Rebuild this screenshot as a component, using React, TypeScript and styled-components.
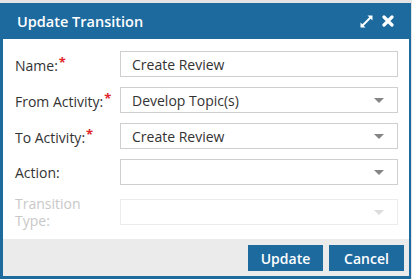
import React from "react";
import styled, { createGlobalStyle } from "styled-components";

const GlobalStyle = createGlobalStyle`
  html, body {
    margin: 0;
    padding: 0;
    background: #e4e4e4;
    font-family: "Open Sans", "Liberation Sans", sans-serif;
  }
`;

const Dialog = styled.div`
  margin-top: 3px;
  width: 411px;
  box-sizing: border-box;
  border: 3px solid #1d6a9e;
  border-top: none;
  border-right-width: 2px;
  background: #fff;
`;

const Header = styled.div`
  height: 36px;
  margin: 0 -2px 0 -3px;
  padding: 0 17px 0 17px;
  background: #1d6a9e;
  display: flex;
  align-items: center;
  justify-content: space-between;
  color: #fff;
`;

const Title = styled.div`
  font-size: 14.5px;
  font-weight: 600;
`;

const HeaderIcons = styled.div`
  display: flex;
  align-items: center;
  gap: 8px;
`;

const Body = styled.div`
  padding: 12px 11px 10px 12px;
  display: flex;
  flex-direction: column;
  gap: 10px;
`;

const Row = styled.div`
  display: flex;
  align-items: center;
  min-height: 26px;
`;

const Label = styled.label<{ $disabled?: boolean }>`
  width: 105px;
  flex: none;
  font-size: 14px;
  line-height: 17px;
  color: ${(p) => (p.$disabled ? "#c8c8c8" : "#333")};
  padding-right: 8px;
  box-sizing: border-box;
`;

const Req = styled.span`
  color: #e0262b;
  font-size: 13px;
  font-weight: 700;
  vertical-align: 4px;
  margin-left: 1px;
`;

const Field = styled.div<{ $disabled?: boolean }>`
  position: relative;
  flex: 1;
  height: 26px;
  box-sizing: border-box;
  border: 1px solid ${(p) => (p.$disabled ? "#ececec" : "#cfcfcf")};
  background: #fff;
  display: flex;
  align-items: center;
  padding: 0 11px;
  font-size: 14px;
  color: #333;
`;

const Caret = styled.span<{ $disabled?: boolean }>`
  position: absolute;
  right: 13px;
  top: 10px;
  width: 0;
  height: 0;
  border-left: 5px solid transparent;
  border-right: 5px solid transparent;
  border-top: 5px solid ${(p) => (p.$disabled ? "#dcdcdc" : "#858585")};
`;

const Footer = styled.div`
  height: 37px;
  background: #ebebeb;
  display: flex;
  align-items: flex-start;
  justify-content: flex-end;
  gap: 6px;
  padding: 6px 5px 0 0;
  box-sizing: border-box;
`;

const Button = styled.button`
  width: 75px;
  height: 26px;
  border: none;
  background: #1d6a9e;
  color: #fff;
  font-family: "Open Sans", "Liberation Sans", sans-serif;
  font-size: 14px;
  font-weight: 600;
  padding: 0;
  cursor: pointer;
`;

const ExpandIcon = () => (
  <svg width="15" height="15" viewBox="0 0 15 15">
    <path d="M3.5 11.5L11.5 3.5" stroke="#fff" strokeWidth="2" />
    <path d="M8.5 1.5h5v5z" fill="#fff" />
    <path d="M1.5 8.5v5h5z" fill="#fff" />
  </svg>
);

const CloseIcon = () => (
  <svg width="12" height="12" viewBox="0 0 12 12">
    <path
      d="M2 2l8 8M10 2l-8 8"
      stroke="#fff"
      strokeWidth="3.2"
      strokeLinecap="round"
    />
  </svg>
);

type FormRow = {
  label: string;
  required?: boolean;
  value?: string;
  select?: boolean;
  disabled?: boolean;
};

const rows: FormRow[] = [
  { label: "Name:", required: true, value: "Create Review" },
  { label: "From Activity:", required: true, value: "Develop Topic(s)", select: true },
  { label: "To Activity:", required: true, value: "Create Review", select: true },
  { label: "Action:", select: true },
  { label: "Transition Type:", select: true, disabled: true },
];

export default function App() {
  return (
    <>
      <GlobalStyle />
      <Dialog>
        <Header>
          <Title>Update Transition</Title>
          <HeaderIcons>
            <ExpandIcon />
            <CloseIcon />
          </HeaderIcons>
        </Header>
        <Body>
          {rows.map((r) => (
            <Row key={r.label}>
              <Label $disabled={r.disabled}>
                {r.label}
                {r.required && <Req>*</Req>}
              </Label>
              <Field $disabled={r.disabled}>
                {r.value}
                {r.select && <Caret $disabled={r.disabled} />}
              </Field>
            </Row>
          ))}
        </Body>
        <Footer>
          <Button>Update</Button>
          <Button>Cancel</Button>
        </Footer>
      </Dialog>
    </>
  );
}
